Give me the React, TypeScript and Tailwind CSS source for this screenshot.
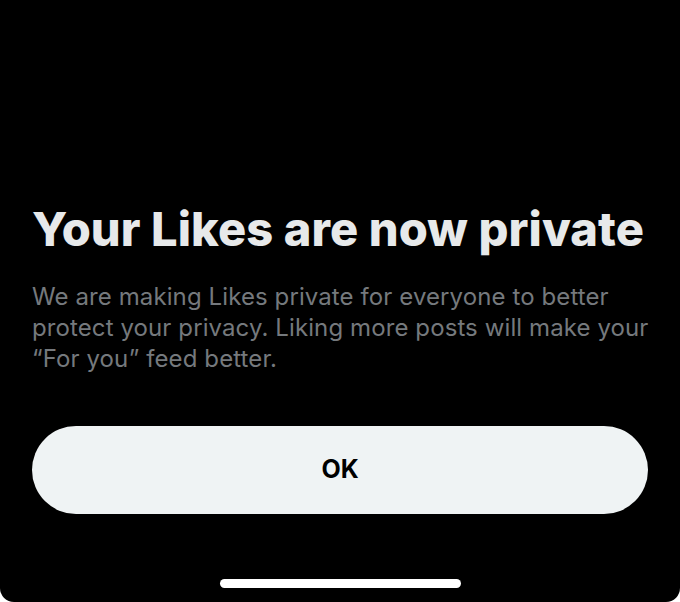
import React from 'react';

const App: React.FC = () => {
    return (
        <div className="w-[680px] h-[602px] bg-white">
            <div className="h-full bg-black rounded-b-[14px] flex flex-col px-8 font-['Inter','Noto_Sans',sans-serif]">
                {/* Title */}
                <h1 className="mt-[201px] text-[47px] leading-[56px] font-extrabold tracking-[0.1px] text-[#e7e9ea] whitespace-nowrap">
                    Your Likes are now private
                </h1>

                {/* Body */}
                <p className="mt-[24px] -mr-[12px] text-[24px] leading-[31px] tracking-[0.1px] text-[#75797d]">
                    We are making Likes private for everyone to better protect your privacy. Liking more posts will make your “For you” feed better.
                </p>

                {/* Action */}
                <button className="mt-[52px] h-[88px] w-full rounded-full bg-[#eff3f4] text-black text-[25px] font-bold">
                    OK
                </button>

                {/* Home indicator */}
                <div className="mt-auto mb-[14px] flex justify-center">
                    <div className="w-[241px] h-[9px] rounded-full bg-white"></div>
                </div>
            </div>
        </div>
    );
};

export default App;
